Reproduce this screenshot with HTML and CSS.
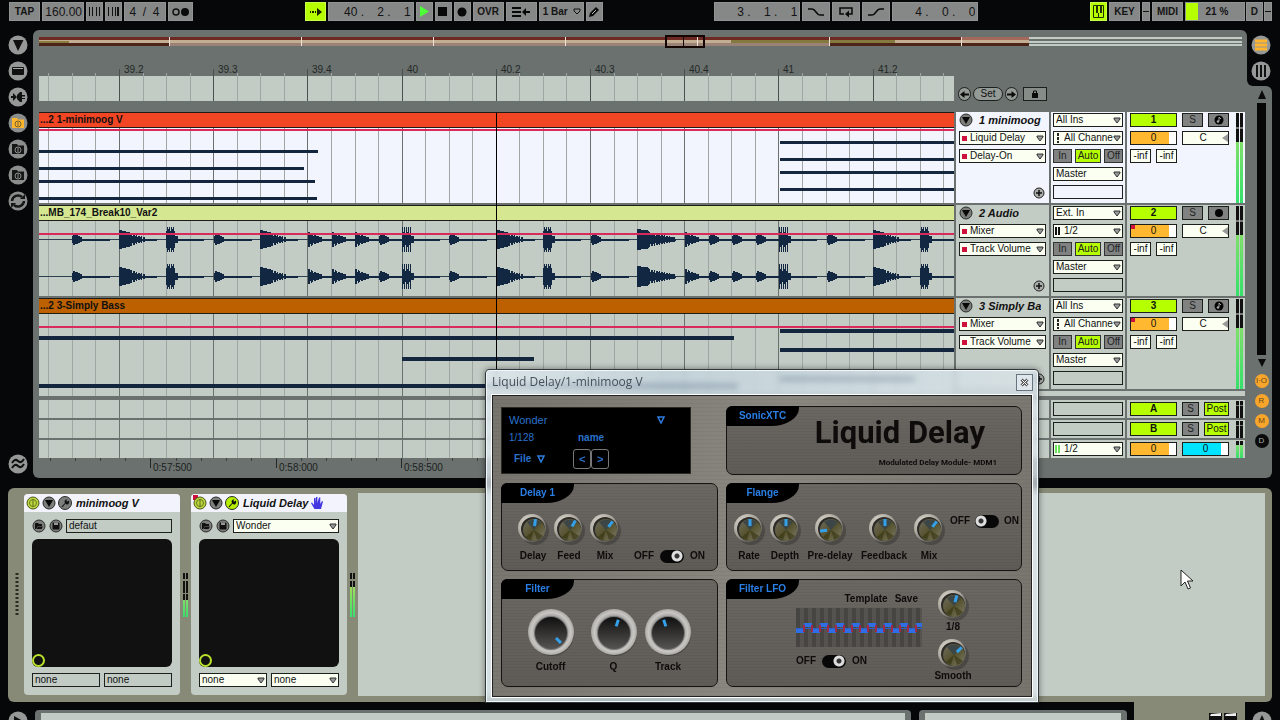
FILE: index.html
```html
<!DOCTYPE html>
<html lang="en">
<head>
<meta charset="utf-8">
<title>Arrangement</title>
<link rel="stylesheet" href="styles.css">
</head>
<body>
<svg class="defs" aria-hidden="true">
  <defs>
    <radialGradient id="rim" cx=".35" cy=".3" r=".8"><stop offset="0" stop-color="#dedad0"/><stop offset=".6" stop-color="#a8a49b"/><stop offset="1" stop-color="#4a4844"/></radialGradient>
    <linearGradient id="brass" x1="0" y1="0" x2="1" y2="1"><stop offset="0" stop-color="#6f6c60"/><stop offset=".5" stop-color="#56522e"/><stop offset="1" stop-color="#7b7a66"/></linearGradient>
    <radialGradient id="bigrim"><stop offset=".6" stop-color="#8b8a88"/><stop offset=".85" stop-color="#c9c7c3"/><stop offset="1" stop-color="#aaa8a3"/></radialGradient>
    <linearGradient id="coal" x1="0" y1="0" x2="0" y2="1"><stop offset="0" stop-color="#101010"/><stop offset="1" stop-color="#565452"/></linearGradient>
    <symbol id="knob" viewBox="0 0 32 32">
      <circle cx="18" cy="18" r="14" fill="#000" opacity=".22"/>
      <circle cx="15" cy="15" r="14" fill="url(#rim)"/>
      <circle cx="16" cy="16" r="12" fill="#2e2c28"/>
      <circle cx="17" cy="17" r="11" fill="url(#brass)"/>
      <path d="M17 17 L10 9 A11 11 0 0 1 24 9Z" fill="#3c4646"/>
      <path d="M17 17 L9 24 A11 11 0 0 0 14 27Z M17 17 L20 27 A11 11 0 0 0 26 23Z" fill="#34320f" opacity=".6"/>
    </symbol>
    <symbol id="bigknob" viewBox="0 0 48 48">
      <circle cx="25" cy="26" r="22" fill="#000" opacity=".25"/>
      <circle cx="24" cy="24" r="23" fill="url(#bigrim)"/>
      <circle cx="24" cy="25" r="17" fill="#777"/>
      <circle cx="24" cy="25" r="16" fill="url(#coal)"/>
    </symbol>
    <symbol id="fold" viewBox="0 0 14 14"><circle cx="7" cy="7" r="6" fill="#7c7e7c" stroke="#2a2c2a"/><path d="M3 4h8l-4 7z" fill="#080808"/></symbol>
    <symbol id="plus" viewBox="0 0 14 14"><circle cx="7" cy="7" r="5" fill="#a9aeaa" stroke="#222"/><path d="M4 7h6M7 4v6" stroke="#111" stroke-width="1.500"/></symbol>
    <symbol id="power" viewBox="0 0 14 14"><circle cx="7" cy="7" r="6" fill="#b9d63c" stroke="#4c5420"/><circle cx="7" cy="7" r="3.500" fill="none" stroke="#6c7c20"/><path d="M7 3v8" stroke="#5d6c1c"/></symbol>
    <symbol id="wrench" viewBox="0 0 14 14"><path d="M3 11l4-4a2.600 2.600 0 0 1 3-4L8.500 4.500l1 1L11 4a2.600 2.600 0 0 1-3.500 4L4 12z" fill="#111"/></symbol>
    <symbol id="open" viewBox="0 0 14 14"><circle cx="7" cy="7" r="6" fill="#7c7e7c" stroke="#2a2c2a"/><path d="M3 4h3l1 1h3v2H6l-2 3H3zM6 7.500h5L9.500 10H4.500z" fill="#111"/></symbol>
    <symbol id="save" viewBox="0 0 14 14"><circle cx="7" cy="7" r="6" fill="#7c7e7c" stroke="#2a2c2a"/><path d="M3.500 3.500h6l1 1v6h-7z" fill="#111"/><path d="M5 3.500h4v2.500H5z" fill="#999"/></symbol>
    <symbol id="folder" viewBox="0 0 20 20"><circle cx="10" cy="10" r="9.500" fill="#8c8d8d"/><path d="M4 5h5l1 1.500h6V15H4z" fill="#161616"/><circle cx="10" cy="11" r="3" fill="none" stroke="#8c8d8d"/><path d="M10 9v4" stroke="#8c8d8d"/></symbol>
    <symbol id="note" viewBox="0 0 12 12"><circle cx="6" cy="6" r="4.500" fill="#050505"/><path d="M6 3v4M6 3l2 2" stroke="#a5a5a5"/><circle cx="5" cy="7.500" r="1.300" fill="#a5a5a5"/></symbol>
  </defs>
</svg>

<header class="toolbar">
  <div class="group">
    <button class="tb w31">TAP</button>
    <input class="tb num w42" aria-label="Tempo" value="160.00">
    <button class="tb w17" aria-label="Nudge down"><svg width="13" height="10"><path d="M1.500 0v9M4.500 0v9M8.500 0v9M11.500 0v9" stroke="#111" stroke-width="1"/></svg></button>
    <button class="tb w17" aria-label="Nudge up"><svg width="13" height="10"><path d="M1.500 0v9M5.500 0v9M8.500 0v9" stroke="#111"/><path d="M11 0v9" stroke="#111" stroke-width="2"/></svg></button>
    <input class="tb num mid w42" aria-label="Time signature" value="4  /  4">
    <button class="tb w25" aria-label="Metronome"><svg width="18" height="10"><circle cx="4" cy="5" r="3" fill="none" stroke="#111" stroke-width="1.500"/><circle cx="13" cy="5" r="4" fill="#0a0a0a"/></svg></button>
  </div>
  <div class="group">
    <button class="tb lime w21" aria-label="Follow"><svg width="13" height="10"><path d="M1 4h1v2H1zM3 4h2v2H3zM6 4h1v2H6zM8 1l5 4-5 4z" fill="#152000"/></svg></button>
    <input class="tb num pos w86" aria-label="Position" value="40 .    2 .    1">
    <button class="tb w17" aria-label="Play"><svg width="12" height="11"><path d="M2 0l9 5.500L2 11z" fill="#4dff36"/></svg></button>
    <button class="tb w17" aria-label="Stop"><svg width="10" height="10"><path d="M0 0h9v9H0z" fill="#080808"/></svg></button>
    <button class="tb w17" aria-label="Record"><svg width="10" height="10"><circle cx="5" cy="5" r="4.500" fill="#080808"/></svg></button>
    <button class="tb w31">OVR</button>
    <button class="tb w31" aria-label="Back to arrangement"><svg width="18" height="10"><path d="M0 1h9M0 5h9M0 9h9" stroke="#080808" stroke-width="2"/><path d="M10 5l4-4v3h4v2h-4v3z" fill="#080808"/></svg></button>
    <select class="tb quant w45" aria-label="Quantization"><option>1 Bar</option></select>
    <button class="tb w17" aria-label="Draw"><svg width="12" height="12"><path d="M1 11l1-4 6-6 3 3-6 6z" fill="#0a0a0a"/><path d="M4 8l4-4" stroke="#bbb"/></svg></button>
  </div>
  <div class="group">
    <input class="tb num pos w86" aria-label="Loop start" value="3 .    1 .    1">
    <button class="tb w28" aria-label="Punch in"><svg width="16" height="10"><path d="M0 2h4q2 0 4 3t4 3h4" fill="none" stroke="#0a0a0a" stroke-width="1.500"/></svg></button>
    <button class="tb w28" aria-label="Loop"><svg width="14" height="12"><path d="M5 8H1V2h12v6h-3" fill="none" stroke="#0a0a0a" stroke-width="1.500"/><path d="M6 8l4-3.500v7z" fill="#0a0a0a"/></svg></button>
    <button class="tb w28" aria-label="Punch out"><svg width="16" height="10"><path d="M0 8h4q2 0 4-3t4-3h4" fill="none" stroke="#0a0a0a" stroke-width="1.500"/></svg></button>
    <input class="tb num pos w86" aria-label="Loop length" value="4 .    0 .    0">
  </div>
  <div class="group">
    <button class="tb lime w17" aria-label="Computer keyboard"><svg width="11" height="13"><path d="M.5.500h10v12H.5z" fill="none" stroke="#253000"/><path d="M3 0h2v8H3zM7 0h2v8H7z" fill="#253000"/><path d="M5.500 8v4" stroke="#253000"/></svg></button>
    <button class="tb w31">KEY</button>
    <span class="tb w8 led"></span>
    <button class="tb w31">MIDI</button>
    <span class="load"><span class="tb cpu w60">21 %</span><span class="tb w17">D</span><span class="tb w8 led"></span></span>
  </div>
</header>

<main class="workspace">
  <nav class="rail">
    <button aria-label="Hide browser"><svg viewBox="0 0 20 20"><circle cx="10" cy="10" r="9.500" fill="#969797"/><path d="M5 5h10.500L10 16z" fill="#101010"/></svg></button>
    <button aria-label="Clip view"><svg viewBox="0 0 20 20"><circle cx="10" cy="10" r="9.500" fill="#969797"/><rect x="4" y="6" width="12" height="8" rx="1" fill="#101010"/><path d="M5 7.500h10" stroke="#aaa"/></svg></button>
    <button aria-label="Plug-ins"><svg viewBox="0 0 20 20"><circle cx="10" cy="10" r="9.500" fill="#969797"/><path d="M3 9h2V6l4 4-4 4v-3H3zM9 8l3-3h2v3h3v1.500h-3v1.500h3V12h-3v3h-2l-3-3z" fill="#101010"/></svg></button>
    <button aria-label="Files 1"><svg viewBox="0 0 20 20"><circle cx="10" cy="10" r="9.500" fill="#8c8d8d"/><path d="M4 5h5l1 1.500h6V15H4z" fill="#ffb52c"/><circle cx="10" cy="11" r="3" fill="none" stroke="#7a6030"/><path d="M10 9v4" stroke="#7a6030"/></svg></button>
    <button aria-label="Files 2"><svg><use href="#folder"/></svg></button>
    <button aria-label="Files 3"><svg><use href="#folder"/></svg></button>
    <button aria-label="Hot-swap"><svg viewBox="0 0 20 20"><circle cx="10" cy="10" r="9.500" fill="#8c8d8d"/><path d="M4 10a6 6 0 0 1 10-4M16 10a6 6 0 0 1-10 4" fill="none" stroke="#161616" stroke-width="2.500"/><path d="M12 8h5V3zM8 12H3v5z" fill="#161616"/></svg></button>
    <button class="last" aria-label="Groove pool"><svg viewBox="0 0 20 20"><circle cx="10" cy="10" r="9.500" fill="#969797"/><path d="M4 9q3-5 6-2t6-2M4 14q3-5 6-2t6-2" fill="none" stroke="#101010" stroke-width="2"/></svg></button>
  </nav>

  <section class="arrange">
    <div class="overview"><svg id="overview" width="100%" height="16"></svg></div>
    <div class="timebar">
      <svg id="ruler" class="ruler" height="44"></svg>
      <div class="locators">
        <button class="round" aria-label="Previous locator"><svg width="9" height="9"><path d="M0 4.500L4.500 1v2.500H9v2H4.500V8z" fill="#0a0a0a"/></svg></button>
        <button class="set">Set</button>
        <button class="round" aria-label="Next locator"><svg width="9" height="9"><path d="M9 4.500L4.500 1v2.500H0v2h4.500V8z" fill="#0a0a0a"/></svg></button>
        <button class="lock" aria-label="Lock envelopes"><svg width="8" height="8"><path d="M1 3h6v5H1z" fill="#0a0a0a"/><path d="M2.500 3V1h3v2" fill="none" stroke="#0a0a0a"/></svg></button>
      </div>
    </div>

    <div class="tracks">
      <div class="playhead"></div>

      <div class="track selected">
        <div class="lane"><div class="clip red">...2 1-minimoog V</div><svg class="grid" data-lane="synth"></svg></div>
        <div class="strips">
          <div class="cell name">
            <div class="row"><svg class="ic"><use href="#fold"/></svg><h2>1 minimoog</h2></div>
            <select class="box dev" aria-label="Device"><option>Liquid Delay</option></select>
            <select class="box dev" aria-label="Parameter"><option>Delay-On</option></select>
            <button class="add" aria-label="Add lane"><svg class="ic"><use href="#plus"/></svg></button>
          </div>
          <div class="cell io">
            <select class="box" aria-label="Input"><option>All Ins</option></select>
            <select class="box chan" aria-label="Channel"><option>All Channe</option></select>
            <div class="row mon"><button>In</button><button class="on">Auto</button><button>Off</button></div>
            <select class="box" aria-label="Output"><option>Master</option></select>
            <div class="box empty"></div>
          </div>
          <div class="cell mix">
            <div class="row"><button class="act">1</button><button class="sq">S</button><button class="sq" aria-label="Arm"><svg width="12" height="12"><use href="#note"/></svg></button></div>
            <div class="row"><span class="vol">0</span><span class="pan">C</span></div>
            <div class="row"><span class="inf">-inf</span><span class="inf">-inf</span></div>
            <div class="meter"><i></i><i></i></div>
          </div>
        </div>
      </div>

      <div class="track">
        <div class="lane"><div class="clip green">...MB_174_Break10_Var2</div><svg class="grid" data-lane="audio"></svg></div>
        <div class="strips">
          <div class="cell name">
            <div class="row"><svg class="ic"><use href="#fold"/></svg><h2>2 Audio</h2></div>
            <select class="box dev" aria-label="Device"><option>Mixer</option></select>
            <select class="box dev" aria-label="Parameter"><option>Track Volume</option></select>
            <button class="add" aria-label="Add lane"><svg class="ic"><use href="#plus"/></svg></button>
          </div>
          <div class="cell io">
            <select class="box" aria-label="Input"><option>Ext. In</option></select>
            <select class="box stereo" aria-label="Channel"><option>1/2</option></select>
            <div class="row mon"><button>In</button><button class="on">Auto</button><button>Off</button></div>
            <select class="box" aria-label="Output"><option>Master</option></select>
            <div class="box empty"></div>
          </div>
          <div class="cell mix">
            <div class="row"><button class="act">2</button><button class="sq">S</button><button class="sq" aria-label="Arm"><svg width="12" height="12"><circle cx="6" cy="6" r="4" fill="#050505"/></svg></button></div>
            <div class="row"><span class="vol auto">0</span><span class="pan">C</span></div>
            <div class="row"><span class="inf">-inf</span><span class="inf">-inf</span></div>
            <div class="meter"><i></i><i></i></div>
          </div>
        </div>
      </div>

      <div class="track">
        <div class="lane"><div class="clip orange">...2 3-Simply Bass</div><svg class="grid tall" data-lane="bass"></svg></div>
        <div class="strips third">
          <div class="cell name">
            <div class="row"><svg class="ic"><use href="#fold"/></svg><h2>3 Simply Ba</h2></div>
            <select class="box dev" aria-label="Device"><option>Mixer</option></select>
            <select class="box dev" aria-label="Parameter"><option>Track Volume</option></select>
            <button class="add" aria-label="Add lane"><svg class="ic"><use href="#plus"/></svg></button>
          </div>
          <div class="cell io">
            <select class="box" aria-label="Input"><option>All Ins</option></select>
            <select class="box chan" aria-label="Channel"><option>All Channe</option></select>
            <div class="row mon"><button>In</button><button class="on">Auto</button><button>Off</button></div>
            <select class="box" aria-label="Output"><option>Master</option></select>
            <div class="box empty"></div>
          </div>
          <div class="cell mix">
            <div class="row"><button class="act">3</button><button class="sq">S</button><button class="sq" aria-label="Arm"><svg width="12" height="12"><use href="#note"/></svg></button></div>
            <div class="row"><span class="vol auto">0</span><span class="pan">C</span></div>
            <div class="row"><span class="inf">-inf</span><span class="inf">-inf</span></div>
            <div class="meter"><i></i><i></i></div>
          </div>
          <div class="filler"></div>
        </div>
      </div>

      <div class="track bus first">
        <div class="lane"><svg class="grid"></svg></div>
        <div class="strips">
          <div class="cell name"></div>
          <div class="cell io"><div class="box empty"></div></div>
          <div class="cell mix"><div class="row"><button class="act">A</button><button class="sq">S</button><button class="post">Post</button></div><div class="meter idle"><i></i><i></i></div></div>
        </div>
      </div>
      <div class="track bus">
        <div class="lane"><svg class="grid"></svg></div>
        <div class="strips">
          <div class="cell name"></div>
          <div class="cell io"><div class="box empty"></div></div>
          <div class="cell mix"><div class="row"><button class="act">B</button><button class="sq">S</button><button class="post">Post</button></div><div class="meter idle"><i></i><i></i></div></div>
        </div>
      </div>
      <div class="track bus">
        <div class="lane"><svg class="grid"></svg></div>
        <div class="strips">
          <div class="cell name"></div>
          <div class="cell io"><select class="box stereo live" aria-label="Master output"><option>1/2</option></select></div>
          <div class="cell mix"><div class="row"><span class="vol">0</span><span class="cue">0</span></div><div class="meter"><i></i><i></i></div></div>
        </div>
      </div>
    </div>
    <svg id="clock" class="clock" width="100%" height="20"></svg>
  </section>

  <aside class="side">
    <div class="views">
      <button aria-label="Arrangement view"><svg viewBox="0 0 20 20"><circle cx="10" cy="10" r="9.500" fill="#969797"/><path d="M4 6h12M4 10h12M4 14h12" stroke="#ffb52c" stroke-width="3"/></svg></button>
      <button aria-label="Session view"><svg viewBox="0 0 20 20"><circle cx="10" cy="10" r="9.500" fill="#969797"/><path d="M6 4v12M10 4v12M14 4v12" stroke="#101010" stroke-width="2"/></svg></button>
    </div>
    <div class="scroll">
      <svg width="10" height="10"><path d="M5 0l4 9H1z" fill="#0a0a0a"/></svg>
      <div class="bar"></div>
      <svg width="10" height="10"><path d="M5 9L1 1h8z" fill="#0a0a0a"/></svg>
      <div class="toggles"><button>I·O</button><button>R</button><button>M</button><button class="off">D</button></div>
    </div>
  </aside>
</main>

<section class="chain">
  <svg class="ridge" width="4" height="44"><path d="M2 0v44" stroke="#2a2c20" stroke-width="3" stroke-dasharray="2 2"/></svg>
  <article class="device">
    <header><svg class="ic"><use href="#power"/></svg><svg class="ic"><use href="#fold"/></svg><svg class="ic round-ic"><use href="#wrench"/></svg><h3>minimoog V</h3></header>
    <div class="preset"><svg class="ic"><use href="#open"/></svg><svg class="ic"><use href="#save"/></svg><span class="box plain">defaut</span></div>
    <div class="pad"><i></i></div>
    <div class="axes"><span class="box plain">none</span><span class="box plain">none</span></div>
  </article>
  <div class="level"><i></i><i></i></div>
  <article class="device">
    <header class="marked"><svg class="ic"><use href="#power"/></svg><svg class="ic"><use href="#fold"/></svg><svg class="ic round-ic active"><use href="#wrench"/></svg><h3>Liquid Delay</h3><svg width="12" height="14"><path d="M3.500 13Q1 9 0 7l1-.500L3 9V2h1.400v5L5 1h1.400v6L8 1.500h1.300V8L11 5l1 .5L10 13z" fill="#4436e0"/></svg></header>
    <div class="preset"><svg class="ic"><use href="#open"/></svg><svg class="ic"><use href="#save"/></svg><select class="box" aria-label="Preset"><option>Wonder</option></select></div>
    <div class="pad"><i></i></div>
    <div class="axes"><select class="box" aria-label="X axis"><option>none</option></select><select class="box" aria-label="Y axis"><option>none</option></select></div>
  </article>
  <div class="level hot"><i></i><i></i></div>
  <div class="drop"></div>
</section>

<footer class="status">
  <button class="corner" aria-label="Show info"><svg viewBox="0 0 20 20"><circle cx="10" cy="10" r="9.500" fill="#969797"/><path d="M6 5l9 5-9 5z" fill="#101010"/></svg></button>
  <div class="info"></div>
  <div class="info small"></div>
  <div class="tab"><svg width="30" height="8"><path d="M0 0h13v8H0zM15 0h13v8H15z" fill="#111"/><path d="M1 3l1-2 10-1v3zM16 3l1-2 10-1v3z" fill="#eee"/></svg></div>
  <button class="corner" aria-label="Hide detail"><svg viewBox="0 0 20 20"><circle cx="10" cy="10" r="9.500" fill="#969797"/><path d="M10 4l5 11H5z" fill="#101010"/></svg></button>
</footer>

<section class="window" role="dialog" aria-label="Liquid Delay">
  <header><span>Liquid Delay/1-minimoog V</span><button aria-label="Close"><svg width="9" height="9"><path d="M1.500 1.500l6 6M7.500 1.500l-6 6" stroke="#555" stroke-width="3"/><path d="M1.500 1.500l6 6M7.500 1.500l-6 6" stroke="#fff"/></svg></button></header>
  <div class="plugin">
    <div class="screen">
      <div class="line"><span>Wonder</span><svg class="tri" width="8" height="8"><path d="M1 1h6L4 7z" fill="none" stroke="#2d7de0" stroke-width="1.500"/></svg></div>
      <div class="line"><small>1/128</small><b>name</b></div>
      <div class="line file"><b>File</b><svg width="8" height="8"><path d="M1 1h6L4 7z" fill="none" stroke="#2d7de0" stroke-width="1.500"/></svg><button>&lt;</button><button>&gt;</button></div>
    </div>
    <div class="panel brand"><h4>SonicXTC</h4><h1>Liquid Delay</h1><p>Modulated Delay Module- MDM1</p></div>
    <div class="panel knobs"><h4>Delay 1</h4>
      <label class="knob"><svg><use href="#knob"/><path d="M17 6v7" transform="rotate(8 17 17)"/></svg><input type="range">Delay</label>
      <label class="knob"><svg><use href="#knob"/><path d="M17 6v7" transform="rotate(30 17 17)"/></svg><input type="range">Feed</label>
      <label class="knob"><svg><use href="#knob"/><path d="M17 6v7" transform="rotate(38 17 17)"/></svg><input type="range">Mix</label>
      <label class="switch low">OFF <input type="checkbox" checked> ON</label>
    </div>
    <div class="panel knobs flange"><h4>Flange</h4>
      <label class="knob"><svg><use href="#knob"/><path d="M17 6v7"/></svg><input type="range">Rate</label>
      <label class="knob"><svg><use href="#knob"/><path d="M17 6v7"/></svg><input type="range">Depth</label>
      <label class="knob wide"><svg><use href="#knob"/><path d="M17 6v7" transform="rotate(-95 17 17)"/></svg><input type="range">Pre-delay</label>
      <label class="knob wide"><svg><use href="#knob"/><path d="M17 6v7"/></svg><input type="range">Feedback</label>
      <label class="knob"><svg><use href="#knob"/><path d="M17 6v7" transform="rotate(38 17 17)"/></svg><input type="range">Mix</label>
      <label class="switch high">OFF <input type="checkbox"> ON</label>
    </div>
    <div class="panel filter"><h4>Filter</h4>
      <label class="knob big"><svg><use href="#bigknob"/><path d="M24 11v7" transform="rotate(135 24 25)"/></svg><input type="range">Cutoff</label>
      <label class="knob big"><svg><use href="#bigknob"/><path d="M24 11v7" transform="rotate(18 24 25)"/></svg><input type="range">Q</label>
      <label class="knob big"><svg><use href="#bigknob"/><path d="M24 11v7" transform="rotate(-18 24 25)"/></svg><input type="range">Track</label>
    </div>
    <div class="panel lfo"><h4>Filter LFO</h4>
      <div class="shape">
        <div class="links"><button>Template</button><button>Save</button></div>
        <svg id="steps" width="126" height="39"></svg>
        <label class="switch">OFF <input type="checkbox" checked> ON</label>
      </div>
      <div class="stack">
        <label class="knob"><svg><use href="#knob"/><path d="M17 6v7" transform="rotate(15 17 17)"/></svg><input type="range">1/8</label>
        <label class="knob"><svg><use href="#knob"/><path d="M17 6v7" transform="rotate(45 17 17)"/></svg><input type="range">Smooth</label>
      </div>
    </div>
  </div>
</section>

<svg class="cursor" width="14" height="22"><path d="M1 1v16l4-4 3 7 2.500-1-3-7H13z" fill="#fff" stroke="#222"/></svg>
<script src="script.js"></script>
</body>
</html>
```

FILE: styles.css
```css
* { box-sizing: border-box; }
body {
  margin: 0; min-height: 100vh; position: relative; background: #060708; color: #111;
  font: 10px/12px "Liberation Sans", Arial, sans-serif;
  display: flex; flex-direction: column; overflow: hidden;
}
button, input, select { font: inherit; color: inherit; margin: 0; padding: 0; border: 0; border-radius: 0; background: none; appearance: none; }
h1, h2, h3, h4, p { margin: 0; font: inherit; }
svg { display: block; flex: none; }
.defs { position: absolute; width: 0; height: 0; }
.ic { width: 14px; height: 14px; }

/* toolbar */
.toolbar { display: flex; justify-content: space-between; padding: 2px 8px 9px 9px; }
.group { display: flex; gap: 2px; }
.load { display: flex; gap: 1px; }
.tb {
  height: 19px; background: #868787; border: 1px solid #929393; color: #141414; font-weight: bold;
  display: flex; align-items: center; justify-content: center; white-space: pre;
}
.tb.num { font-size: 12px; font-weight: normal; text-align: right; padding-right: 1px; }
.tb.mid { text-align: center; }
.tb.pos { padding-right: 2px; }
.tb.lime { background: #b6ff00; border-color: #c8ff4a; }
.tb.quant { padding-left: 3px; background: #868787 url("data:image/svg+xml,%3Csvg xmlns='http://www.w3.org/2000/svg' width='8' height='7'%3E%3Cpath d='M1 1h6v2L4 6 1 3z' fill='none' stroke='%23111'/%3E%3C/svg%3E") no-repeat right 2px center; }
.tb.led { background: linear-gradient(#868787 8px, #111 8px, #111 9px, #868787 9px); }
.tb.cpu { background: linear-gradient(90deg, #b6ff00 12px, #868787 12px); padding-left: 4px; }
.w8 { width: 8px; } .w17 { width: 17px; } .w21 { width: 21px; } .w25 { width: 25px; } .w28 { width: 28px; }
.w31 { width: 31px; } .w42 { width: 42px; } .w45 { width: 45px; } .w60 { width: 60px; } .w86 { width: 86px; }

/* workspace */
.workspace { display: flex; }
.rail { width: 33px; padding: 5px 0 4px 8px; display: flex; flex-direction: column; gap: 6px; }
.rail svg, .views svg, .corner svg { width: 20px; height: 20px; }
.rail .last { margin-top: auto; }
.arrange { flex: 1; min-width: 0; background: #6a716e; border-radius: 6px 6px 0 6px; padding: 4px 2px 0 6px; }
.overview { padding-right: 3px; }
.timebar { display: flex; padding-top: 11px; }
.ruler { flex: 1; min-width: 0; }
.locators { width: 291px; display: flex; align-items: end; gap: 2px; padding: 0 0 4px 4px; }
.round, .set, .lock { height: 14px; border: 1px solid #1c1f1d; background: #949a96; display: flex; align-items: center; justify-content: center; }
.round { width: 13px; border-radius: 7px; }
.set { width: 30px; border-radius: 7px; }
.lock { width: 24px; margin-left: 3px; background: #868c88; }
.tracks { position: relative; margin-top: 7px; display: flex; flex-direction: column; gap: 2px; }
.playhead { position: absolute; left: 457px; top: 0; bottom: 0; width: 1px; background: #000; }
.track { display: flex; gap: 2px; }
.lane { flex: 1; min-width: 0; background: #c3cbc5; }
.selected .lane { background: #f2f4fe; }
.clip { height: 16px; border: solid #1d1d16; border-width: 1px 0; padding-left: 1px; font-weight: bold; line-height: 14px; }
.red { background: #f14523; } .green { background: #d6e792; } .orange { background: #bc6000; }
.grid { width: 100%; height: 75px; }
.grid.tall { height: 82px; }
.bus .grid { height: 18px; }
.strips { width: 289px; display: grid; grid-template-columns: 93px 74px 1fr; gap: 2px; }
.third { grid-template-rows: 91px 1fr; }
.filler { grid-column: 1 / -1; background: #c3cbc5; }
.track.first { margin-top: 2px; }
.cell { background: #c3cbc5; position: relative; padding: 1px 2px; display: flex; flex-direction: column; gap: 4px; min-height: 18px; }
.selected .cell { background: #f2f4fe; }
.cell.name { padding: 1px 3px; }
.row { display: flex; height: 14px; align-items: center; }
h2, h3 { font-size: 11px; font-weight: bold; font-style: italic; white-space: nowrap; overflow: hidden; }
.name h2 { padding-left: 6px; }
.add { margin: auto 0 2px auto; }
.box {
  height: 14px; width: 100%; border: 1px solid #1c1f1c; padding: 0 12px 0 2px; line-height: 12px; overflow: hidden; white-space: nowrap;
  background: #fafff2 url("data:image/svg+xml,%3Csvg xmlns='http://www.w3.org/2000/svg' width='9' height='7'%3E%3Cpath d='M1 1h6v1L4 6 1 2z' fill='%23999' stroke='%23333'/%3E%3C/svg%3E") no-repeat right 0 center;
}
.box.empty, .box.plain { background: none; }
.box.dev { padding-left: 10px; background-image: linear-gradient(#d0103c, #d0103c), url("data:image/svg+xml,%3Csvg xmlns='http://www.w3.org/2000/svg' width='9' height='7'%3E%3Cpath d='M1 1h6v1L4 6 1 2z' fill='%23999' stroke='%23333'/%3E%3C/svg%3E"); background-size: 5px 5px, 9px 7px; background-position: 2px center, right 0 center; background-repeat: no-repeat; }
.box.chan, .box.stereo { padding-left: 10px; background-image: repeating-linear-gradient(#222 0 3px, #fafff2 3px 4px), url("data:image/svg+xml,%3Csvg xmlns='http://www.w3.org/2000/svg' width='9' height='7'%3E%3Cpath d='M1 1h6v1L4 6 1 2z' fill='%23999' stroke='%23333'/%3E%3C/svg%3E"); background-size: 2px 10px, 9px 7px; background-position: 3px center, right 0 center; background-repeat: no-repeat; }
.box.chan { padding-right: 7px; }
.box.stereo { background-image: linear-gradient(90deg, #111 0 2px, #fafff2 2px 3px, #111 3px), url("data:image/svg+xml,%3Csvg xmlns='http://www.w3.org/2000/svg' width='9' height='7'%3E%3Cpath d='M1 1h6v1L4 6 1 2z' fill='%23999' stroke='%23333'/%3E%3C/svg%3E"); background-size: 5px 8px, 9px 7px; background-position: 1px center, right 0 center; }
.box.live { background-image: linear-gradient(90deg, #6be45c 0 2px, #fafff2 2px 3px, #6be45c 3px), url("data:image/svg+xml,%3Csvg xmlns='http://www.w3.org/2000/svg' width='9' height='7'%3E%3Cpath d='M1 1h6v1L4 6 1 2z' fill='%23999' stroke='%23333'/%3E%3C/svg%3E"); }
.mon { justify-content: space-between; }
.mon button, .sq { height: 14px; width: 19px; border: 1px solid #333; background: #808282; display: flex; align-items: center; justify-content: center; color: #222; }
.mon .on { width: 26px; background: #b6ff00; }
.cell.mix { padding: 1px 3px; }
.mix .row { gap: 5px; }
.mix .row > * { height: 14px; border: 1px solid #1c1f1c; text-align: center; line-height: 12px; }
.mix .act { width: 47px; background: #b6ff00; font-weight: bold; }
.mix .sq { width: 21px; }
.vol { width: 47px; background: linear-gradient(90deg, #ffb830 38px, #fff 38px); }
.vol.auto { background: linear-gradient(#d0103c, #d0103c) 0 0 / 4px 4px no-repeat, linear-gradient(90deg, #ffb830 38px, #fff 38px); }
.pan { width: 47px; padding-right: 5px; background: #fafff2; position: relative; }
.pan::after { content: ""; position: absolute; right: 0; top: 2px; border: 4px solid transparent; border-right: 6px solid #999; border-left: 0; }
.cue { width: 47px; background: linear-gradient(90deg, #00e4ff 38px, #fff 38px); }
.inf { width: 21px; background: #fafff2; }
.bus .sq { width: 17px; }
.bus .post { width: 25px; background: #b6ff00; overflow: hidden; }
.bus .cell { padding-top: 2px; }
.meter { position: absolute; right: 2px; top: 1px; bottom: 0; display: flex; gap: 1px; }
.meter i { width: 3px; background: linear-gradient(#111 14px, #777 14px, #777 16px, #111 16px 29px, #7fe06a 29px, #36e06c); }
.bus .meter i { background: linear-gradient(#111 4px, #7fe06a 4px, #36e06c); }
.bus .idle i { background: linear-gradient(#111 4px, #777 4px, #777 5px, #111 5px); }

.side { width: 33px; display: flex; flex-direction: column; }
.views { background: #6a716e; display: flex; flex-direction: column; }
.views button { background: #060708; padding: 5px 0 0 4px; height: 31px; display: flex; align-items: start; }
.views button + button { border-radius: 0 0 0 6px; height: 25px; padding-top: 0; }
.scroll { flex: 1; width: 25px; background: #6a716e; border-radius: 0 6px 6px 0; padding: 4px 0 30px 4px; display: flex; flex-direction: column; align-items: center; gap: 3px; }
.bar { width: 9px; flex: 1; background: #070707; }
.toggles { display: flex; flex-direction: column; gap: 6px; padding-top: 3px; }
.toggles button { width: 14px; height: 14px; border-radius: 7px; background: #f8a52c; color: #6b4a14; font-size: 8px; line-height: 14px; text-align: center; }
.toggles .off { background: #0a0a0a; color: #aaa; }

/* device chain */
.chain { margin: 10px 8px 0; background: #878a76; border-radius: 6px; height: 214px; padding: 5px 7px 6px; display: flex; }
.ridge { align-self: center; margin-right: 5px; }
.device { width: 156px; margin-top: 1px; background: #c3cbc5; border-radius: 4px; overflow: hidden; height: 201px; }
.device header { height: 18px; background: #f2f3fc; display: flex; align-items: center; gap: 2px; padding-left: 2px; }
.device header.marked { background: linear-gradient(#d0103c, #d0103c) 2px 1px / 5px 5px no-repeat, #f2f3fc; }
.device h3 { padding: 0 1px 0 2px; }
.round-ic { background: #7c7e7c; border-radius: 7px; border: 1px solid #2a2c2a; }
.round-ic.active { background: #b6f000; }
.preset { display: flex; gap: 3px; padding: 7px 8px 6px; align-items: center; }
.preset .box { flex: 1; width: auto; min-width: 0; }
.pad { margin: 0 8px; height: 128px; border-radius: 6px; background: #111; display: flex; align-items: end; }
.pad i { width: 13px; height: 13px; border: 2px solid #b9e02c; border-radius: 7px; }
.axes { display: flex; gap: 4px; padding: 6px 8px; }
.level { width: 11px; display: flex; justify-content: center; gap: 1px; padding-top: 80px; }
.level i { width: 2px; height: 44px; background: linear-gradient(#111 6px, #878a76 6px 8px, #111 8px 20px, #878a76 20px 21px, #111 21px 27px, #7fe06a 27px, #36e06c); }
.level.hot i { background: linear-gradient(#111 6px, #878a76 6px 8px, #111 8px 14px, #9fe05a 14px, #36e06c); }
.drop { flex: 1; background: #c3cbc5; }

.status { display: flex; height: 18px; overflow: hidden; padding: 0 8px; align-items: start; }
.corner { padding-top: 9px; width: 20px; }
.info { flex: 1; height: 24px; margin: 8px 0 0 7px; border: 6px solid #6a716e; border-top-width: 3px; border-radius: 4px; background: #c3cbc5; }
.info.small { flex: none; width: 208px; margin-left: 8px; }
.tab { width: 111px; height: 18px; margin: 0 7px; background: #878a76; display: flex; justify-content: end; padding: 11px 6px 0 0; }
.corner:last-child { margin-left: auto; }

/* floating plug-in window */
.window {
  position: absolute; left: 485px; top: 369px; width: 554px; padding: 0 5px 4px; border: 1px solid #30363a; border-radius: 4px 4px 0 0;
  background: linear-gradient(100deg, rgba(226,236,242,.78), rgba(196,214,226,.68) 30%, rgba(224,234,240,.74)); backdrop-filter: blur(3px);
  box-shadow: inset 0 0 0 1px #f2f7fa, 0 0 6px rgba(0,0,0,.45);
}
.window > header { height: 24px; display: flex; justify-content: space-between; align-items: center; padding: 0 0 0 1px; font: 12px/16px "Open Sans", "Noto Sans", sans-serif; color: #46505a; }
.window > header button { width: 17px; height: 17px; border: 1px solid #69757e; background: #dfe7ec; display: flex; align-items: center; justify-content: center; }
.plugin {
  border: 1px solid #fff; outline: 1px solid #222; outline-offset: -2px; padding: 11px 8px 10px 9px; font-weight: bold; color: #0d0c0b;
  display: grid; grid-template-columns: 217px 1fr; grid-template-rows: 69px 88px 108px; gap: 8px;
  background: repeating-linear-gradient(rgba(0,0,0,.04) 0 1px, transparent 1px 4px), linear-gradient(100deg, #77736d, #8a8680 50%, #77736d);
}
.panel { position: relative; border: 1px solid #151412; border-radius: 7px; background: repeating-linear-gradient(rgba(0,0,0,.04) 0 1px, transparent 1px 3px), linear-gradient(#6a6762, #5f5c57); display: flex; }
.panel h4 { position: absolute; left: -1px; top: -1px; width: 73px; height: 20px; line-height: 19px; text-align: center; color: #2a7fe6; background: #000; border-radius: 6px 0 28px 0 / 6px 0 18px 0; }
.screen { width: 190px; height: 67px; margin-top: 1px; background: #000; border: 1px solid #2b2926; color: #2a72cc; display: flex; flex-direction: column; padding: 3px 7px; }
.line { display: flex; height: 18px; align-items: center; font-weight: normal; font-size: 11px; }
.line .tri { margin: 0 18px 0 auto; }
.line small { font-size: 10px; width: 69px; }
.line b { font-size: 10px; }
.file { height: 23px; padding-left: 5px; gap: 6px; }
.file svg + button { margin-left: 22px; }
.file button { width: 18px; height: 20px; border: 1px solid #777; border-radius: 3px; margin-right: -6px; font-weight: bold; }
.plugin > :nth-child(even) { margin-right: 2px; }
.brand { flex-direction: column; align-items: end; }
.brand h1 { font: bold 31px/40px Roboto, "Liberation Sans", sans-serif; padding: 6px 36px 0 0; }
.brand p { font: bold 8px/12px Roboto, "Liberation Sans", sans-serif; padding: 4px 24px 0 0; }
.knobs { padding: 29px 6px 0 13px; }
.knobs.flange { padding: 29px 0 0 4px; }
.knob { width: 36px; display: flex; flex-direction: column; align-items: center; gap: 5px; white-space: nowrap; position: relative; height: 50px; }
.knob.wide { width: 54px; }
.knob svg { width: 32px; height: 32px; overflow: visible; }
.knob svg > path { stroke: #35a0ea; stroke-width: 3; }
.knob input { position: absolute; inset: 0; width: 100%; opacity: 0; }
.filter { padding: 28px 0 0 17px; }
.knob.big { width: 63px; height: 66px; }
.knob.big:last-child { width: 46px; }
.knob.big svg { width: 48px; height: 48px; }
.switch { display: flex; align-items: center; gap: 6px; height: 14px; }
.switch input { width: 24px; height: 13px; border-radius: 7px; background: radial-gradient(circle at 6px 6px, #333 0 2px, #ddd 3px 5px, #080808 6px); }
.switch input:checked { background: radial-gradient(circle at 17px 6px, #333 0 2px, #ddd 3px 5px, #080808 6px); }
.switch.low { margin: 36px 6px 0 auto; }
.switch.high { margin: 1px 0 0 3px; gap: 5px; }
.lfo { padding: 9px 0 0 69px; justify-content: space-between; }
.shape { display: flex; flex-direction: column; padding-top: 3px; }
.links { display: flex; justify-content: end; gap: 7px; padding: 1px 4px 3px 0; }
.shape .switch { margin-top: 7px; }
.stack { width: 60px; margin-right: 38px; display: flex; flex-direction: column; align-items: center; }
.stack .knob { height: 49px; gap: 0; }
.cursor { position: absolute; left: 1180px; top: 569px; }
```

FILE: script.js
```js
const NS = 'http://www.w3.org/2000/svg';
const LEFT = 39;
const WIDTH = 2400;

function add(svg, tag, attrs, text) {
  const el = document.createElementNS(NS, tag);
  for (const key in attrs) el.setAttribute(key, attrs[key]);
  if (text) el.textContent = text;
  svg.appendChild(el);
  return el;
}
function rect(svg, x, y, width, height, fill) {
  return add(svg, 'rect', { x, y, width, height, fill });
}
// One sixteenth every 23.55 units; each fourth line is a beat.
function gridLines(svg, top, height) {
  for (let k = -3; k < 100; k++) {
    const x = Math.round(80 + k * 23.55);
    rect(svg, x, top, 1, height, k % 4 === 0 ? '#6b716f' : '#9fa6a3');
  }
}
document.querySelectorAll('.grid').forEach(svg => gridLines(svg, 0, 90));

function notes(svg, list, h) {
  list.forEach(([x1, x2, y]) => rect(svg, x1 - LEFT, y, x2 - x1, h, '#14263e'));
}
function automation(svg, y) { rect(svg, 0, y, WIDTH, 2, '#d92a5c'); }

const synth = document.querySelector('[data-lane=synth]');
notes(synth, [[39, 318, 22], [39, 304, 39], [39, 315, 52], [39, 317, 69],
  [780, 1200, 13], [780, 1200, 30], [780, 1200, 43], [780, 1200, 60]], 3);
automation(synth, 1);

const bass = document.querySelector('[data-lane=bass]');
notes(bass, [[39, 734, 22], [402, 534, 43], [39, 738, 70], [780, 1200, 15], [780, 1200, 34], [780, 915, 63]], 4);
automation(bass, 12);

const audio = document.querySelector('[data-lane=audio]');
const hits = [[72, 's'], [119, 'b'], [166, 'x'], [214, 's'], [260, 'b'], [308, 'm'], [332, 'm'], [355, 'm'], [379, 's'],
  [402, 'y'], [449, 's'], [497, 'b'], [543, 'x'], [591, 's'], [637, 'l'], [685, 'm'], [709, 's'], [732, 's'], [756, 's'],
  [779, 'y'], [827, 's'], [873, 'b'], [920, 'x']];
// Half-height of the waveform i units after the start of a hit.
function level(type, i) {
  const j = [1, .7, .95, .6, .85][i % 5];
  if (type === 's') return i < 12 ? [3, 5, 5, 4, 4, 4, 3, 3, 2, 2, 1, 1][i] : 1;
  if (type === 'm') return i < 15 ? (7 - i * .42) * (i % 3 === 2 ? .7 : 1) : 1;
  if (type === 'b') return i < 12 ? 9 - i * .25 : i < 32 ? Math.max(1, (6 - (i - 12) * .32) * j) : 1;
  if (type === 'l') return i < 12 ? 10 - i * .15 : i < 44 ? (7 - (i - 12) * .2) * j : 1;
  if (type === 'x') return i < 9 ? 12 * [.7, 1, .85, 1][i % 4] : i < 12 ? 3 : 1;
  return i < 9 ? 12 * [1, .6, 1, .4][i % 4] : i < 12 ? 3 : 1;
}
[18, 55].forEach(cy => {
  rect(audio, 0, cy, WIDTH, 1, '#2c4050');
  hits.forEach(([x, type]) => {
    let d = '';
    for (let i = 0; i < 46; i++) {
      const a = Math.round(level(type, i));
      const h = a <= 1 ? 2 : a * 2 + 1;
      d += `M${x - LEFT + i} ${cy - (a <= 1 ? 0 : a)}v${h}h1v${-h}z`;
      if (a <= 1 && i > 36) break;
    }
    add(audio, 'path', { d, fill: '#122842' });
  });
});
automation(audio, 12);

const ruler = document.getElementById('ruler');
rect(ruler, 0, 15, WIDTH, 25, '#c3cbc5');
gridLines(ruler, 12, 28);
['39.2', '39.3', '39.4', '40', '40.2', '40.3', '40.4', '41', '41.2'].forEach((label, i) => {
  const x = Math.round(80 + i * 94.2);
  rect(ruler, x, 8, 1, 32, '#4a504d');
  add(ruler, 'text', { x: x + 5, y: 12, fill: '#242827' }, label);
});

const overview = document.getElementById('overview');
rect(overview, 0, 3, 990, 3, '#6e2a22');
rect(overview, 922, 3, 68, 3, '#a5695c');
rect(overview, 0, 6, 990, 3, '#c3ae94');
rect(overview, 0, 7, 30, 2, '#8a7c3c');
rect(overview, 692, 6, 164, 4, '#847a40');
rect(overview, 0, 9, 990, 3, '#9a8376');
rect(overview, 0, 9, 130, 3, '#4c2418');
rect(overview, 790, 9, 200, 3, '#4c2418');
[3, 7, 10].forEach(y => rect(overview, 990, y, WIDTH, 2, '#c3cbc5'));
[130, 262, 394, 526, 658, 790, 922].forEach(x => rect(overview, x, 3, 1, 9, '#eee4d8'));
add(overview, 'rect', { x: 627, y: 2, width: 38, height: 11, fill: 'none', stroke: '#150606', 'stroke-width': 2 });
rect(overview, 644, 3, 1, 9, '#150606');

const clock = document.getElementById('clock');
for (let k = 0; k < 36; k++) rect(clock, Math.round(11 + k * 25.1), 0, 1, 3, '#3c413f');
['0:57:500', '0:58:000', '0:58:500', '0:59:000'].forEach((label, i) => {
  const x = Math.round(111 + i * 125.6);
  rect(clock, x, 1, 1, 9, '#242827');
  add(clock, 'text', { x: x + 3, y: 13, fill: '#1c1f1e' }, label);
});

const steps = document.getElementById('steps');
rect(steps, 0, 0, 126, 39, '#55534f');
for (let i = 0; i < 16; i++) {
  rect(steps, i * 8, 0, 4, 39, '#474541');
  const low = i % 2 === 0;
  rect(steps, i * 8, low ? 20 : 15, 8, low ? 5 : 4, '#2f6fe6');
}
rect(steps, 0, 20, 126, 1, '#2f5fc6');
for (let i = 1; i < 16; i++) rect(steps, i * 8 - 1, 17, 2, 7, '#a02848');
```
